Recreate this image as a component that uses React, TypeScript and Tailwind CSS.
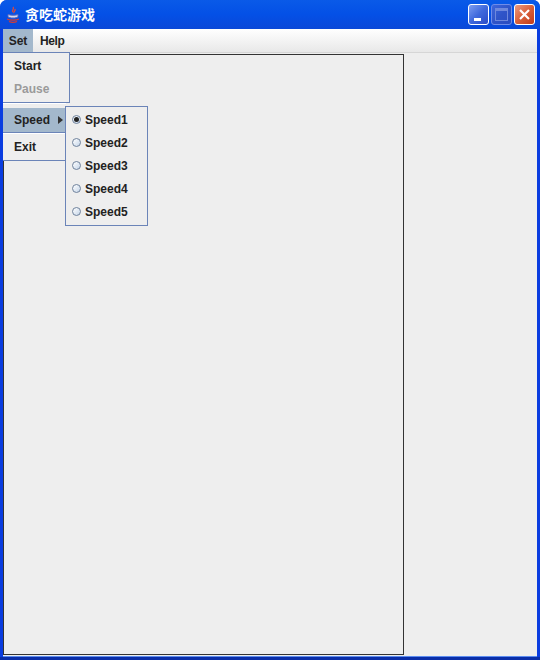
import React from 'react';

const font = "font-['Liberation_Sans',Arial,sans-serif]";

const speeds = ['Speed1', 'Speed2', 'Speed3', 'Speed4', 'Speed5'];

const JavaIcon = () => (
  <svg width="16" height="18" viewBox="0 0 16 18" className="shrink-0">
    <path d="M8 1c2 2-2 3 0 5M10 3c1 2-2 3-1 4" fill="none" stroke="#e04a3a" strokeWidth="1.3" />
    <path d="M3 8.500c2 1 8 1 10 0v2c-1 2-9 2-10 0z" fill="#d8dcf0" stroke="#5a68c0" strokeWidth="1" />
    <path d="M2 13c3 1.500 9 1.500 12 0M4 15.500c2 .8 6 .8 8 0" fill="none" stroke="#d83c30" strokeWidth="1.300" />
  </svg>
);

const Radio = ({ checked }: { checked?: boolean }) => (
  <span className="flex h-[9px] w-[9px] shrink-0 items-center justify-center rounded-full border border-[#6f829c] bg-gradient-to-br from-[#ffffff] to-[#c5d5e8]">
    {checked && <span className="h-[5px] w-[5px] rounded-full bg-[#222222]" />}
  </span>
);

const WinButton = ({ kind }: { kind: 'min' | 'max' | 'close' }) => {
  if (kind === 'close') {
    return (
      <div className="flex h-[21px] w-[21px] items-center justify-center rounded-[3px] border border-white bg-gradient-to-br from-[#e89a80] via-[#d9603a] to-[#c03a18]">
        <svg width="13" height="13" viewBox="0 0 13 13">
          <path d="M2 2l9 9M11 2l-9 9" stroke="#ffffff" strokeWidth="2.200" />
        </svg>
      </div>
    );
  }
  if (kind === 'min') {
    return (
      <div className="flex h-[21px] w-[21px] items-end rounded-[3px] border border-white bg-gradient-to-br from-[#7d9cf0] via-[#3f68dc] to-[#2a4cc8] pb-[3px] pl-[5px]">
        <div className="h-[3px] w-[7px] bg-white" />
      </div>
    );
  }
  return (
    <div className="flex h-[21px] w-[21px] items-center justify-center rounded-[3px] border border-[#6f8ce8] bg-gradient-to-br from-[#3f66dc] via-[#2f54c8] to-[#2a4cc0]">
      <div className="h-[13px] w-[13px] border border-[#6f88dc] border-t-[3px]" />
    </div>
  );
};

export default function App() {
  return (
    <div className={`${font} h-[668px] w-[547px] bg-white`}>
      <div className="flex h-[660px] w-[540px] flex-col overflow-hidden rounded-t-[7px] bg-[#0a3de0]">
        <div className="flex h-[29px] shrink-0 items-center justify-between bg-gradient-to-b from-[#0a5ae8] via-[#0450e6] to-[#0a48d8] pl-[5px] pr-[5px]">
          <div className="flex items-center gap-[4px]">
            <JavaIcon />
            <span className="font-['Noto_Sans_CJK_SC',sans-serif] text-[14px] font-bold text-white">贪吃蛇游戏</span>
          </div>
          <div className="flex gap-[2px]">
            <WinButton kind="min" />
            <WinButton kind="max" />
            <WinButton kind="close" />
          </div>
        </div>

        <div className="relative mx-[3px] flex min-h-0 flex-1 flex-col bg-[#eeeeee]">
          <div className="flex h-[24px] shrink-0 items-stretch border-b border-[#d6d6d6] bg-gradient-to-b from-white to-[#e8e8e8] text-[12px] font-bold text-[#222222]">
            <div className="flex w-[30px] items-center justify-center bg-[#a3b8cc]">Set</div>
            <div className="flex items-center pl-[7px] tracking-[-0.4px]">Help</div>
          </div>
          <div className="mt-[1px] h-[601px] w-[401px] border border-[#333333] bg-[#eeeeee]" />

          {/* Set menu */}
          <div className="absolute left-0 top-[23px] w-[67px] text-[12px] font-bold text-[#222222]">
            <div className="border border-l-0 border-[#6b84b8] bg-[#eeeeee] pl-[1px] pt-[1px]">
              <div className="flex h-[23px] items-center pl-[10px]">Start</div>
              <div className="flex h-[23px] items-center pl-[10px] text-[#9a9a9a]">Pause</div>
              <div className="h-[2px]" />
            </div>
          </div>
          <div className="absolute left-0 top-[74px] w-[63px] text-[12px] font-bold text-[#222222]">
            <div className="h-[5px] border-t border-white bg-[#eeeeee]" />
            <div className="flex h-[24px] items-center justify-between bg-[#a3b8cc] pl-[11px] pr-[3px]">
              <span>Speed</span>
              <span className="h-0 w-0 border-y-[4px] border-l-[5px] border-y-transparent border-l-[#333333]" />
            </div>
            <div className="h-[2px] border-t border-[#6b84b8] bg-white" />
            <div className="flex h-[27px] items-center border-b border-[#6b84b8] bg-[#eeeeee] pl-[11px]">Exit</div>
          </div>

          {/* Speed submenu */}
          <div className="absolute left-[62px] top-[77px] w-[83px] border border-[#6b84b8] bg-[#eeeeee] pb-[2px] pt-[1px] text-[12px] font-bold text-[#222222]">
            {speeds.map((speed, i) => (
              <div key={speed} className="flex h-[23px] items-center gap-[4px] pl-[6px]">
                <Radio checked={i === 0} />
                <span>{speed}</span>
              </div>
            ))}
          </div>
        </div>
        <div className="h-[1px] shrink-0 bg-[#5c8cf0] mx-[3px]" />
        <div className="h-[3px] shrink-0 bg-[#0a2ea8]" />
      </div>
    </div>
  );
}
